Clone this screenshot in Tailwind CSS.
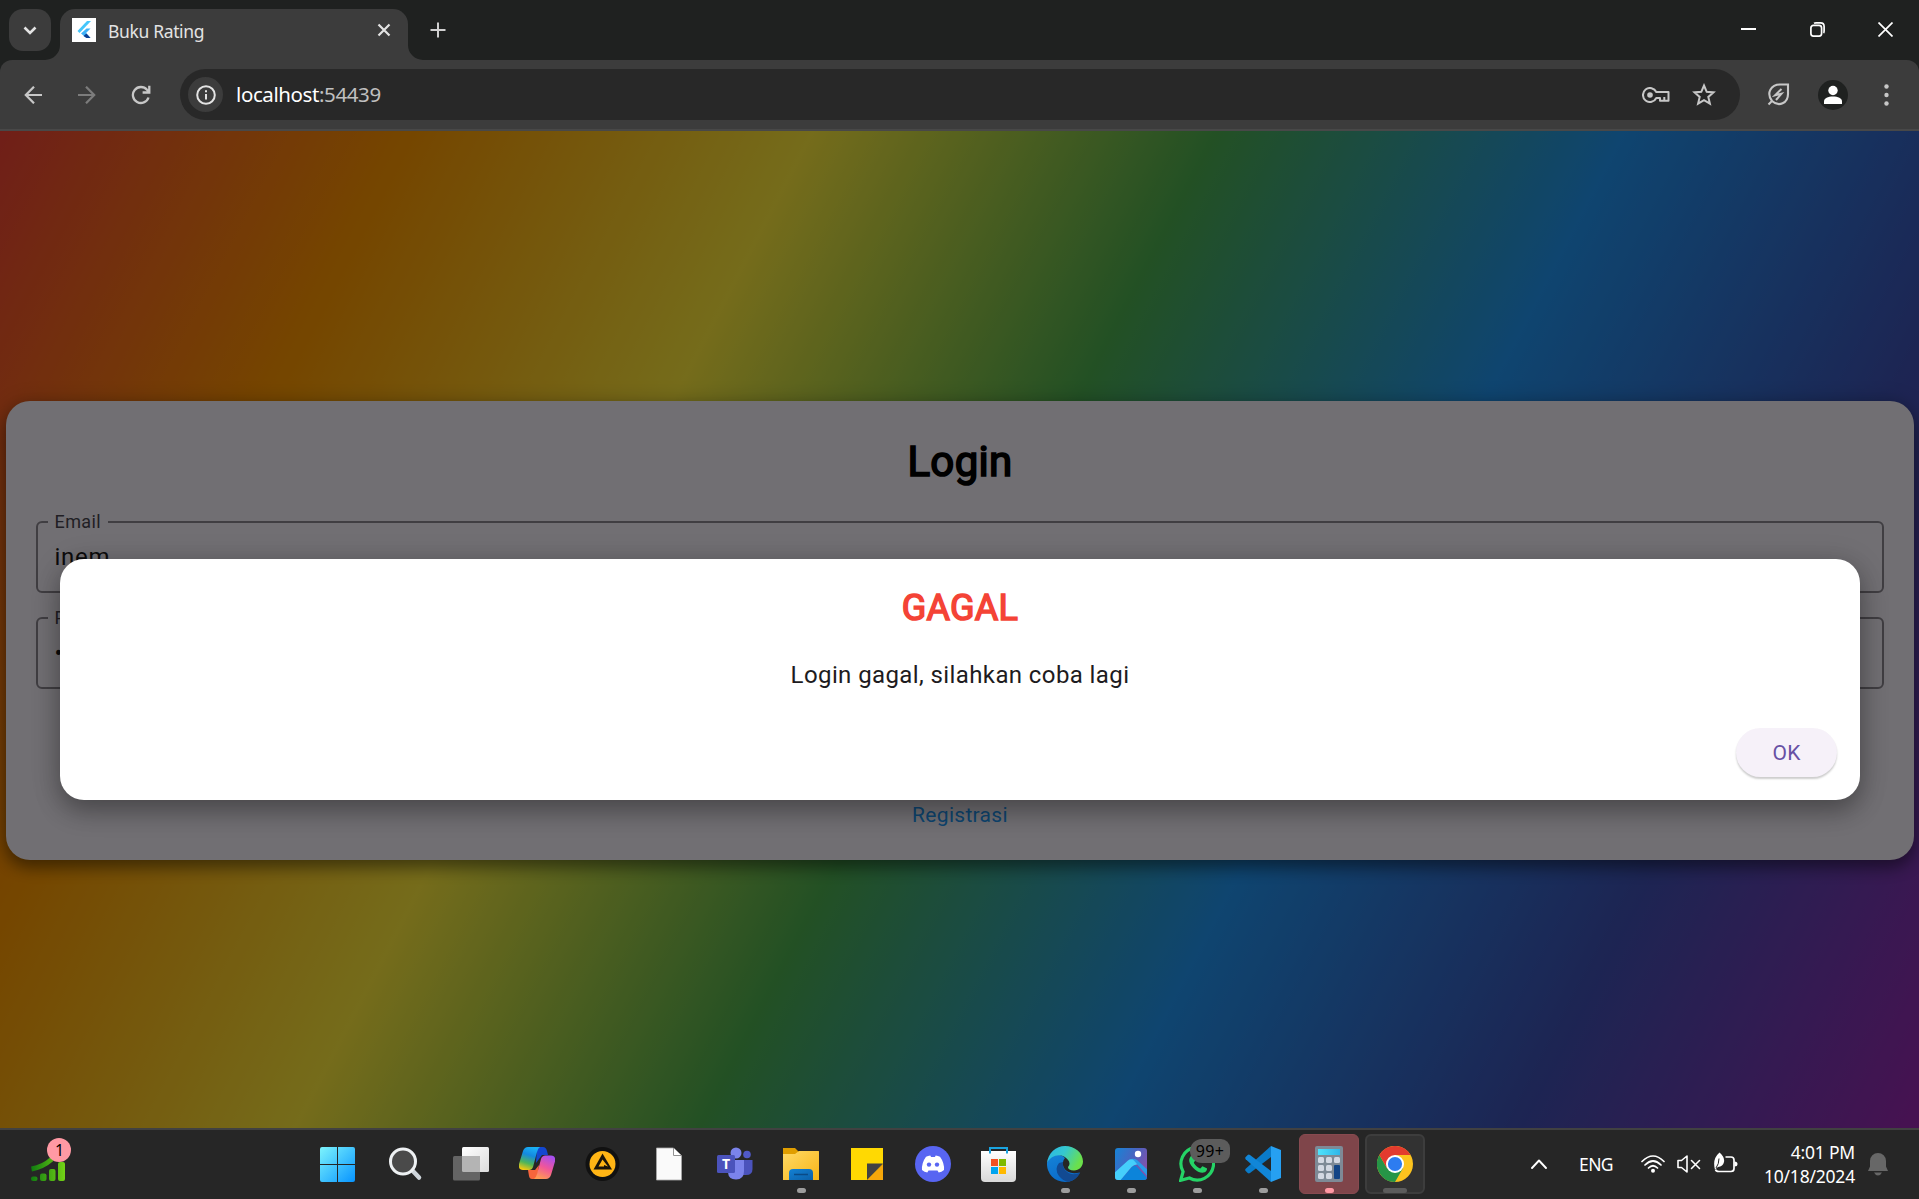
<!DOCTYPE html>
<html lang="en">
<head>
<meta charset="utf-8">
<title>Buku Rating</title>
<script src="https://cdn.jsdelivr.net/npm/@tailwindcss/browser@4"></script>
</head>
<body class="flex h-[1199px] w-[1919px] flex-col overflow-hidden bg-[#262626] font-['Noto_Sans',sans-serif]">

<!-- Tab strip -->
<header class="flex h-[60px] shrink-0 items-start bg-[#1f2120]">
  <div class="ml-[9px] mt-[9px] flex size-[42px] items-center justify-center rounded-[14px] bg-[#3c3c3c]">
    <svg class="size-[14px]" viewBox="0 0 14 14" fill="none" stroke="#e3e3e3" stroke-width="2.6"><path d="M1.5 4.5 7 10l5.500-5.500"/></svg>
  </div>
  <svg class="mt-[45px] -ml-[6px] h-[15px] w-[15px]" viewBox="0 0 15 15"><path d="M15 0v15H0A15 15 0 0 0 15 0Z" fill="#3c3c3c"/></svg>
  <div class="flex h-[51px] w-[348px] mt-[9px] items-center rounded-t-[15px] bg-[#3c3c3c] pl-3 pb-[9px]">
    <svg class="size-6 bg-white" viewBox="0 0 24 24"><path d="M5.500 13 15 3h4L7.500 15Z" fill="#45c6fb"/><path d="M14.500 10.500h4l-4.500 4.500 4.500 5h-4L9 15.500Z" fill="#3fb2f8"/><path d="m11.500 18 3-2.500 4 4.500h-4Z" fill="#0b3f94"/></svg>
    <span class="ml-[12px] mt-[3px] w-[260px] text-[17.500px] tracking-[-0.350px] text-[#e3e3e3]">Buku Rating</span>
    <svg class="ml-[9px] size-[14px]" viewBox="0 0 14 14" fill="none" stroke="#e3e3e3" stroke-width="2.200"><path d="m1.500 1.500 11 11m0-11-11 11"/></svg>
  </div>
  <svg class="mt-[45px] h-[15px] w-[15px]" viewBox="0 0 15 15"><path d="M0 0v15h15A15 15 0 0 1 0 0Z" fill="#3c3c3c"/></svg>
  <svg class="ml-[7px] mt-[22px] size-4" viewBox="0 0 16 16" stroke="#d0d0d0" stroke-width="2"><path d="M8 .5v15M.5 8h15"/></svg>
  <div class="ml-auto mr-[26px] mt-[22px] flex items-center gap-[53.500px]">
    <svg class="size-[15px]" viewBox="0 0 15 15"><path d="M0 6h15v2H0z" fill="#fff"/></svg>
    <svg class="size-[15px]" viewBox="0 0 15 15" fill="none" stroke="#fff" stroke-width="1.700"><rect x=".9" y="3.400" width="10.700" height="10.700" rx="2.500"/><path d="M4 1.200Q4.500.9 6 .9h4.500q3.600 0 3.600 3.600V9q0 1.500-.6 2"/></svg>
    <svg class="size-[15px]" viewBox="0 0 15 15" stroke="#fff" stroke-width="1.700"><path d="m.5.5 14 14m0-14-14 14"/></svg>
  </div>
</header>

<!-- Toolbar -->
<div class="h-[71px] shrink-0 bg-[#1f2120]">
<div class="flex h-[71px] items-center rounded-t-[12px] border-b-2 border-[#484848] bg-[#3c3c3c]">
  <svg class="ml-[24px] mt-[1px] size-[18px]" viewBox="0 0 18 18" fill="none" stroke="#c7c7c7" stroke-width="2.200"><path d="M18 9H2m8-8.300L1.800 9l8.200 8.300"/></svg>
  <svg class="ml-[36px] mt-[1px] size-[18px]" viewBox="0 0 18 18" fill="none" stroke="#7c7c7c" stroke-width="2.200"><path d="M0 9h16M8 .7 16.200 9 8 17.300"/></svg>
  <svg class="ml-[35px] mt-[1px] size-5" viewBox="0 0 20 20" fill="none" stroke="#c7c7c7" stroke-width="2.300"><path d="M17.500 12.500A8 8 0 1 1 16 4.800l2 2.200M18.300.8v6.700h-6.700"/></svg>
  <div class="ml-[29px] flex h-[51px] w-[1560px] items-center rounded-full bg-[#282828] pl-[8px]">
    <div class="flex size-[35px] items-center justify-center rounded-full bg-[#3c3c3c]">
      <svg class="size-5" viewBox="0 0 20 20" fill="none" stroke="#e3e3e3" stroke-width="2"><circle cx="10" cy="10" r="8.800"/><path d="M10 9v5.500M10 5.300v2"/></svg>
    </div>
    <span class="ml-[13px] text-[20.500px] leading-none tracking-[-0.400px] text-white">localhost<span class="text-[#c0c0c0]">:54439</span></span>
    <svg class="ml-auto h-4 w-7" viewBox="0 0 28 16" fill="none" stroke="#c7c7c7" stroke-width="2"><path d="M14.300 5A7 7 0 1 0 14.300 11H18v2.800h8.500V5Z" stroke-linejoin="round"/><path d="M22.300 10v4"/><circle cx="8" cy="8" r="2.800" fill="#c7c7c7" stroke="none"/></svg>
    <svg class="ml-[22px] mr-[24px] h-[23px] w-6" viewBox="0 0 24 23" fill="none" stroke="#c7c7c7" stroke-width="2"><path d="m12 2.500 2.700 6.300 6.800.6-5.200 4.500 1.600 6.700-5.900-3.500-5.900 3.500 1.600-6.700-5.200-4.500 6.800-.6Z"/></svg>
  </div>
  <svg class="ml-[27px] h-[23px] w-[23px]" viewBox="0 0 23 23" fill="none" stroke="#c7c7c7" stroke-width="2.100"><path d="M1.500 21.500 5 18C-1 10 4 1.500 13 1.500h8v9.500c0 9-9 13.500-16 7"/><path d="M14.500 6 8 12.300l6.500-1.600L9 17" stroke-width="2"/></svg>
  <div class="ml-[28px] flex size-[30px] items-center justify-center rounded-full bg-[#1f2120]">
    <svg class="size-[20px]" viewBox="0 0 20 20" fill="#fff"><circle cx="10" cy="5.500" r="4.700"/><path d="M1 19v-2.500c0-3.500 4-5 9-5s9 1.500 9 5V19Z"/></svg>
  </div>
  <svg class="ml-[36px] h-[22px] w-[5px]" viewBox="0 0 5 22" fill="#c7c7c7"><circle cx="2.500" cy="2.500" r="2.200"/><circle cx="2.500" cy="11" r="2.200"/><circle cx="2.500" cy="19.500" r="2.200"/></svg>
</div>
</div>

<!-- Page -->
<main class="relative flex h-[997px] shrink-0 flex-col justify-center overflow-hidden bg-[linear-gradient(117.45deg,#f44336,#ff9800,#ffeb3b,#4caf50,#2196f3,#3f51b5,#9c27b0)] px-[6px] pt-[2px] font-['Roboto',sans-serif]">
  <section class="flex h-[459px] w-[1908px] flex-col rounded-[24px] bg-[#f7f2fa] px-[30px] shadow-[0_8px_15px_rgba(0,0,0,0.35),0_2px_22px_rgba(0,0,0,0.22)]">
    <h1 class="mt-[29px] h-[63px] text-center text-[42px] leading-[63px] tracking-[0.3px] text-black [-webkit-text-stroke:1.700px_#000]">Login</h1>
    <div class="relative mt-[28px] h-[72px] rounded-[6px] border-2 border-[#79747e]/85 px-[16.500px] pt-[17px]">
      <span class="absolute -top-[13px] left-[9.500px] bg-[#f7f2fa] px-[7px] text-[18px] leading-[24px] tracking-[0.4px] text-[#49454f]">Email</span>
      <p class="text-[24px] leading-[34px] tracking-[0.75px] text-[#1d1b20]">inem</p>
    </div>
    <div class="relative mt-[24px] h-[72px] rounded-[6px] border-2 border-[#79747e]/85 px-[16.500px] pt-[17px]">
      <span class="absolute -top-[13px] left-[9.500px] bg-[#f7f2fa] px-[7px] text-[18px] leading-[24px] tracking-[0.4px] text-[#49454f]">Password</span>
      <p class="text-[24px] leading-[34px] tracking-[0.75px] text-[#1d1b20]">••••</p>
    </div>
    <a class="mt-[111px] text-center text-[21px] leading-[30px] tracking-[0.3px] text-[#2196f3]">Registrasi</a>
  </section>
  <div class="absolute inset-0 bg-black/54"></div>
  <div class="absolute left-[60px] top-[428px] flex h-[241px] w-[1800px] flex-col items-center rounded-[24px] bg-white pt-[28px] shadow-[0_12px_24px_rgba(0,0,0,0.25),0_4px_30px_rgba(0,0,0,0.18)]">
    <h2 class="text-[36px] leading-[42px] tracking-[0.25px] text-[#f44336] [-webkit-text-stroke:1.500px_#f44336]">GAGAL</h2>
    <p class="mt-[28px] text-[24px] leading-[36px] tracking-[0.4px] text-[#1d1b20]">Login gagal, silahkan coba lagi</p>
    <button class="mr-[23.500px] mt-[35px] h-[49px] w-[101px] self-end rounded-full bg-[#f6f1f9] pl-px pt-[2px] text-[21px] tracking-[0.15px] text-[#6750a4] shadow-[0_2px_2px_rgba(0,0,0,0.2)]">OK</button>
  </div>
</main>

<!-- Taskbar -->
<footer class="flex h-[71px] shrink-0 items-start border-t-2 border-[#414141] bg-[#262626] pt-1 text-white">
  <div class="relative ml-[30px] mt-[4px] h-[44px] w-[42px]">
    <svg class="size-full" viewBox="0 0 42 44"><defs><linearGradient id="bars" x1="1" y1="0" x2="35" y2="0" gradientUnits="userSpaceOnUse"><stop stop-color="#107c10"/><stop offset="1" stop-color="#73d216"/></linearGradient></defs><path d="M1.500 31Q13 29 22 21" fill="none" stroke="url(#bars)" stroke-width="5"/><g fill="url(#bars)"><rect x="1" y="38.500" width="6.500" height="4.500" rx="2"/><rect x="10" y="35.500" width="6.500" height="7.500" rx="2"/><rect x="19" y="31" width="6.500" height="12" rx="2"/><rect x="28" y="24" width="7" height="19" rx="2"/></g></svg>
    <span class="absolute left-[17px] top-0 flex size-6 items-center justify-center rounded-full bg-[#ff99a4] pl-px text-[16px] leading-none text-black">1</span>
  </div>

  <nav class="ml-[234px] flex">
    <div class="flex h-[60px] w-[63px] items-center justify-center">
      <svg class="size-[35px]" viewBox="0 0 35 35"><defs><linearGradient id="win" x2="1" y2="1" gradientUnits="objectBoundingBox"><stop stop-color="#7df4fc"/><stop offset="1" stop-color="#0794ff"/></linearGradient></defs><path d="M2 0h15v17H0V2q0-2 2-2ZM18 0h15q2 0 2 2v15H18ZM0 18h17v17H2q-2 0-2-2ZM18 18h17v15q0 2-2 2H18Z" fill="url(#win)"/></svg>
    </div>
    <div class="ml-[3px] flex h-[60px] w-[66px] items-center justify-center">
      <svg class="size-9" viewBox="0 0 36 36"><path d="m24 23 8 8.500" stroke="#cfd6dc" stroke-width="4.500" stroke-linecap="round"/><circle cx="16" cy="15.500" r="12.500" fill="#4a4a4a" stroke="#eef1f3" stroke-width="3"/></svg>
    </div>
    <div class="flex h-[60px] w-[66px] items-center justify-center">
      <svg class="size-9" viewBox="0 0 36 36"><defs><linearGradient id="tv" x2="1" y2="1"><stop stop-color="#fff"/><stop offset="1" stop-color="#dcdcdc"/></linearGradient></defs><rect x="9" y="1" width="27" height="25" rx="1.500" fill="url(#tv)"/><rect y="10" width="27" height="24.500" rx="1.500" fill="#646464"/><path d="M9 10h18v16H10.500Q9 26 9 24.500Z" fill="#b4b4b4"/></svg>
    </div>
    <div class="flex h-[60px] w-[66px] items-center justify-center">
      <svg class="size-9" viewBox="0 0 36 36"><defs><linearGradient id="cpA" x1=".6" x2=".3" y2="1"><stop stop-color="#1ab0f5"/><stop offset=".35" stop-color="#1489e0"/><stop offset=".7" stop-color="#4fb55a"/><stop offset="1" stop-color="#f7c80f"/></linearGradient><linearGradient id="cpB" x1=".7" x2=".3" y2="1"><stop stop-color="#a64ff0"/><stop offset=".5" stop-color="#f0569a"/><stop offset="1" stop-color="#ff9b52"/></linearGradient></defs><path d="M18 1h6q3 0 4 4l1 4h-6l-6 8Z" fill="#1347cf"/><path d="M18 33h-5q-2.500 0-3-3L9 24h7l4-5Z" fill="#f6653c"/><path d="M9 1h12q-2 1-3 5l-4 15q-1 3-4 3H4q-5 0-4-6L4 5q1.500-4 5-4Z" fill="url(#cpA)"/><path d="M27 33H15q2-1 3-5l4-15q1-3.500 4.500-3.500H32q5 0 4 6L32 29q-1.500 4-5 4Z" fill="url(#cpB)"/></svg>
    </div>
    <div class="flex h-[60px] w-[66px] items-center justify-center">
      <svg class="size-9" viewBox="0 0 36 36"><circle cx="17.500" cy="18" r="17" fill="#111"/><circle cx="17.500" cy="18" r="13" fill="#ffb515"/><path d="M17.500 7.500 8.500 23.500h18.500Z" fill="#1b1509"/><path d="M17.500 13.500 13.500 20.500h5.500v-1.500l4 1.500Z" fill="#ffb515"/></svg>
    </div>
    <div class="flex h-[60px] w-[66px] items-center justify-center">
      <svg class="size-9" viewBox="0 0 36 36"><path d="M5.500 2h17l8 8v24h-25Z" fill="#fafafa" stroke="#a9a9a9" stroke-width=".8"/><path d="M22.500 2v7.500h8" fill="#fff" stroke="#929292"/></svg>
    </div>
    <div class="flex h-[60px] w-[66px] items-center justify-center">
      <svg class="size-9" viewBox="0 0 36 36"><circle cx="30" cy="8.500" r="3.800" fill="#5059c9"/><path d="M25 14h10.500v9q0 6-6.500 6h-4Z" fill="#4b53bc"/><circle cx="19" cy="7" r="5.500" fill="#7b83eb"/><path d="M11 14h16v11q0 8.500-8 8.500-7.500 0-8-7Z" fill="#7b83eb"/><rect x="0" y="9" width="18" height="18" rx="1.500" fill="#4b53bc"/><text x="9" y="23" text-anchor="middle" font-family="Open Sans" font-weight="700" font-size="14" fill="#fff">T</text></svg>
    </div>
    <div class="relative flex h-[60px] w-[66px] items-center justify-center">
      <svg class="size-9" viewBox="0 0 36 36"><defs><linearGradient id="fol" x2="1" y2="1"><stop stop-color="#ffda66"/><stop offset="1" stop-color="#f8b517"/></linearGradient><linearGradient id="fb" x2="1" y2="1"><stop stop-color="#1381d4"/><stop offset="1" stop-color="#0c60a8"/></linearGradient></defs><path d="M0 2h12l4 4-2 5H0Z" fill="#e09e00"/><path d="M0 8h12l4-3h19.500q.5 0 .5.500V34H0Z" fill="url(#fol)"/><path d="M6 34v-7q0-4 4-4h16q4 0 4 4v7Z" fill="url(#fb)"/><path d="M11 28.500h14" stroke="#0a4a86" stroke-width="1.500"/></svg>
      <i class="absolute bottom-px h-[5px] w-[9px] rounded-full bg-[#9d9d9d]"></i>
    </div>
    <div class="flex h-[60px] w-[66px] items-center justify-center">
      <svg class="size-9" viewBox="0 0 36 36"><path d="M2 2h32v16L18 34H2Z" fill="#ffd902"/><path d="M18 17.500h16L18 34Z" fill="#424242"/><path d="M34 18v16H18Z" fill="#f5a70a"/></svg>
    </div>
    <div class="flex h-[60px] w-[66px] items-center justify-center">
      <svg class="size-9" viewBox="0 0 36 36"><circle cx="18" cy="18" r="18" fill="#5865f2"/><path d="M11 10.800q2-1 4.300-1.300l.8 1.500h3.800l.8-1.500q2.300.3 4.300 1.300Q29.500 17 29 24q-2.500 2-5.300 2.500L22.500 24.500h-9l-1.200 2Q9.500 26 7 24q-.5-7 4-13.200Z" fill="#fff"/><circle cx="14" cy="18.600" r="2.200" fill="#5865f2"/><circle cx="22" cy="18.600" r="2.200" fill="#5865f2"/></svg>
    </div>
    <div class="flex h-[60px] w-[66px] items-center justify-center">
      <svg class="size-9" viewBox="0 0 36 36"><defs><linearGradient id="st" x2="0" y2="1"><stop stop-color="#fff"/><stop offset="1" stop-color="#d8d8d8"/></linearGradient></defs><path d="M0 5h35v27q0 4-4 4H4q-4 0-4-4Z" fill="url(#st)"/><path d="M9 7.500V2h17v5.500" fill="none" stroke="#1aa4e0" stroke-width="2"/><path d="M10 13h7v7h-7z" fill="#f25022"/><path d="M18 13h7v7h-7z" fill="#7fba00"/><path d="M10 21h7v7h-7z" fill="#00a4ef"/><path d="M18 21h7v7h-7z" fill="#ffb900"/></svg>
    </div>
    <div class="relative flex h-[60px] w-[66px] items-center justify-center">
      <svg class="size-9" viewBox="0 0 36 36"><defs><linearGradient id="ed" x2="1" y2=".4"><stop stop-color="#2bb5e8"/><stop offset=".5" stop-color="#35c8cf"/><stop offset="1" stop-color="#6be04b"/></linearGradient><linearGradient id="eb" x2=".5" y2="1"><stop stop-color="#1583d8"/><stop offset="1" stop-color="#0a6bc9"/></linearGradient></defs><path d="M0 17C2 9 12 6 18 12q-4 4-1 10 4 7 16 4.500Q28 36 18 36A18 18 0 0 1 0 17Z" fill="url(#eb)"/><path d="M12 17q-5 6 0 13 4 5 9 5.700 8-1 12.300-9Q24 30.500 18.500 24.500 15.500 21 16 16Z" fill="#124a92"/><path d="M0 17C1 7 9 0 18 0c10 0 18 7 18 15.500 0 5-4 9-9 9-4 0-6-1.500-6-3s1.500-1.500 1.500-4c0-3-2.500-5-5.500-7-6-3-14 0-17 6.500Z" fill="url(#ed)"/></svg>
      <i class="absolute bottom-px h-[5px] w-[9px] rounded-full bg-[#9d9d9d]"></i>
    </div>
    <div class="relative flex h-[60px] w-[66px] items-center justify-center">
      <svg class="size-9" viewBox="0 0 36 36"><defs><linearGradient id="ph" x2="1" y2=".5"><stop stop-color="#1684d6"/><stop offset=".6" stop-color="#4c62bf"/><stop offset="1" stop-color="#8053ad"/></linearGradient><clipPath id="pc"><rect x="2" y="2" width="32" height="32" rx="3"/></clipPath></defs><g clip-path="url(#pc)"><path d="M2 2h32v32H2z" fill="url(#ph)"/><path d="m6 36 13-15q2.500-2.500 5 0l12 13v2Z" fill="#0c84da"/><path d="m18 13 5 4 13 15v-7L24 14q-3-2-6-1Z" fill="#2a9be8"/><path d="M0 28 15 14.500q3-2.500 6 0l3.500 4q-3-.5-6 2.500L6 36H0Z" fill="#45cffb"/></g><circle cx="25" cy="8" r="3.200" fill="#fff"/></svg>
      <i class="absolute bottom-px h-[5px] w-[9px] rounded-full bg-[#9d9d9d]"></i>
    </div>
    <div class="relative flex h-[60px] w-[66px] items-center justify-center">
      <svg class="size-9" viewBox="0 0 36 36"><path d="m1.700 34.300 2.400-8.500a16.300 16.300 0 1 1 6.300 6.200Z" fill="none" stroke="#25d366" stroke-width="3.200"/><path d="M12 10c1-1 2.300-.7 2.800.4l1.500 3.400c.3.800-1.800 2.600-1.400 3.300 1.500 2.700 3.500 4.300 6.200 5.300.8.300 2-2.400 2.900-2l3.700 1.800c1 .5-.4 3.500-2 4-3 1.300-6.500-.2-9.500-2.500-3-2.500-5.700-6-6-8.700-.2-2 .7-4 1.800-5Z" fill="#25d366"/></svg>
      <span class="absolute left-[26px] top-[5px] flex h-6 w-10 items-center justify-center rounded-[12px] rounded-r-[9px] bg-[#5c5c5c] text-[16px] leading-none tracking-[0.3px] text-black">99+</span>
      <i class="absolute bottom-px h-[5px] w-[9px] rounded-full bg-[#9d9d9d]"></i>
    </div>
    <div class="relative flex h-[60px] w-[66px] items-center justify-center">
      <svg class="size-9" viewBox="0 0 36 36"><path d="M26 0v11L5 27q-1.200.8-2.300 0l-2-2q-1-1 0-2.200Z" fill="#0a7bc9"/><path d="M26 36V25L5 9q-1.200-.8-2.300 0l-2 2q-1 1 0 2.200Z" fill="#1186d8"/><path d="M26 0 36 4v28l-10 4Z" fill="#26a0f2"/></svg>
      <i class="absolute bottom-px h-[5px] w-[9px] rounded-full bg-[#9d9d9d]"></i>
    </div>
    <div class="relative mx-[3px] flex h-[60px] w-[60px] items-center justify-center rounded-[6px] border border-[#874a50] bg-[#7f454a]">
      <svg class="size-9" viewBox="0 0 36 36"><defs><linearGradient id="ca" x2="1"><stop stop-color="#4fe3fb"/><stop offset="1" stop-color="#30b6e8"/></linearGradient></defs><rect x="4" width="28" height="36" rx="2" fill="#7e8a96"/><path d="M7 3h22v6H7z" fill="url(#ca)"/><g fill="#d3d8e2"><rect x="7" y="11" width="6" height="6" rx="1.500"/><rect x="15" y="11" width="6" height="6" rx="1.500"/><rect x="23" y="11" width="6" height="6" rx="1.500"/><rect x="7" y="19" width="6" height="6" rx="1.500"/><rect x="15" y="19" width="6" height="6" rx="1.500"/><rect x="7" y="27" width="6" height="6" rx="1.500"/><rect x="15" y="27" width="6" height="6" rx="1.500"/></g><rect x="23" y="19" width="6" height="14" rx="1" fill="#134586"/></svg>
      <i class="absolute bottom-0 h-[5px] w-[9px] rounded-full bg-[#ff99a4]"></i>
    </div>
    <div class="relative mx-[3px] flex h-[60px] w-[60px] items-center justify-center rounded-[6px] border-2 border-[#3d3d3d] bg-[#323232]">
      <svg class="size-9" viewBox="0 0 36 36"><circle cx="18" cy="18" r="18" fill="#fcc31e"/><path d="M2.400 9A18 18 0 0 0 18 36L25.800 22.500 18 18 10.200 22.500Z" fill="#269547"/><path d="M2.400 9A18 18 0 0 1 33.600 9H18L10.200 22.500Z" fill="#e33b2e"/><circle cx="18" cy="18" r="9" fill="#fff"/><circle cx="18" cy="18" r="7.100" fill="#2d7cf0"/></svg>
      <i class="absolute -bottom-px h-[5px] w-6 rounded-full bg-[#5c5c5c]"></i>
    </div>
  </nav>

  <div class="ml-auto flex h-[60px] items-center">
    <svg class="h-[10px] w-4" viewBox="0 0 16 10" fill="none" stroke="#fff" stroke-width="1.900" stroke-linecap="round" stroke-linejoin="round"><path d="m1 9 7-7.500L15 9"/></svg>
    <span class="ml-[32px] w-[36px] text-[17.500px] tracking-[-0.600px]">ENG</span>
    <svg class="ml-[26px] h-[18px] w-6" viewBox="0 0 24 18" fill="none" stroke="#fff" stroke-width="1.700" stroke-linecap="round"><path d="M1 6.500Q12-4.500 23 6.500M4 10q8-8 16 0M7.500 13q4.500-4.500 9 0"/><circle cx="12" cy="15.700" r="2" fill="#fff" stroke="none"/></svg>
    <svg class="ml-3 h-[18px] w-6" viewBox="0 0 24 18" fill="none" stroke="#fff" stroke-width="1.600" stroke-linejoin="round"><path d="M1 5.500h3.500L10 1v16l-5.500-4.500H1Z"/><path d="m14.500 5.500 8 8m0-8-8 8" stroke-linecap="round"/></svg>
    <svg class="ml-[12px] -mt-[3px] h-[21px] w-[25px]" viewBox="0 0 25 21" fill="none" stroke="#fff" stroke-width="1.700"><path d="M12.500 5h5.500q3 0 3 3v8.500q0 3-3 3H6q-3 0-3.500-2"/><path d="M21.500 9.500q3 0 3 2.500t-3 2.500Z" fill="#fff" stroke="none"/><path d="M6.500.5Q12 5 11 10q-1 4.500-6 5L2 17.500Q-1 7 6.500.5Z" fill="#fff" stroke="none"/><path d="M6 6.500Q6 12 3 16" stroke="#262626" stroke-width="1"/></svg>
    <div class="ml-[23px] w-[94px] text-right text-[17.500px] leading-[24px] tracking-[-0.200px] whitespace-nowrap"><div>4:01 PM</div><div>10/18/2024</div></div>
    <svg class="ml-[13px] mr-[31px] h-[23px] w-[20px]" viewBox="0 0 20 23" fill="#676767"><path d="M2 8a8 8 0 0 1 16 0v5.500l2 4.500H0l2-4.500ZM6 19.500h8q-1.500 3-4 3t-4-3Z"/></svg>
  </div>
</footer>
</body>
</html>
